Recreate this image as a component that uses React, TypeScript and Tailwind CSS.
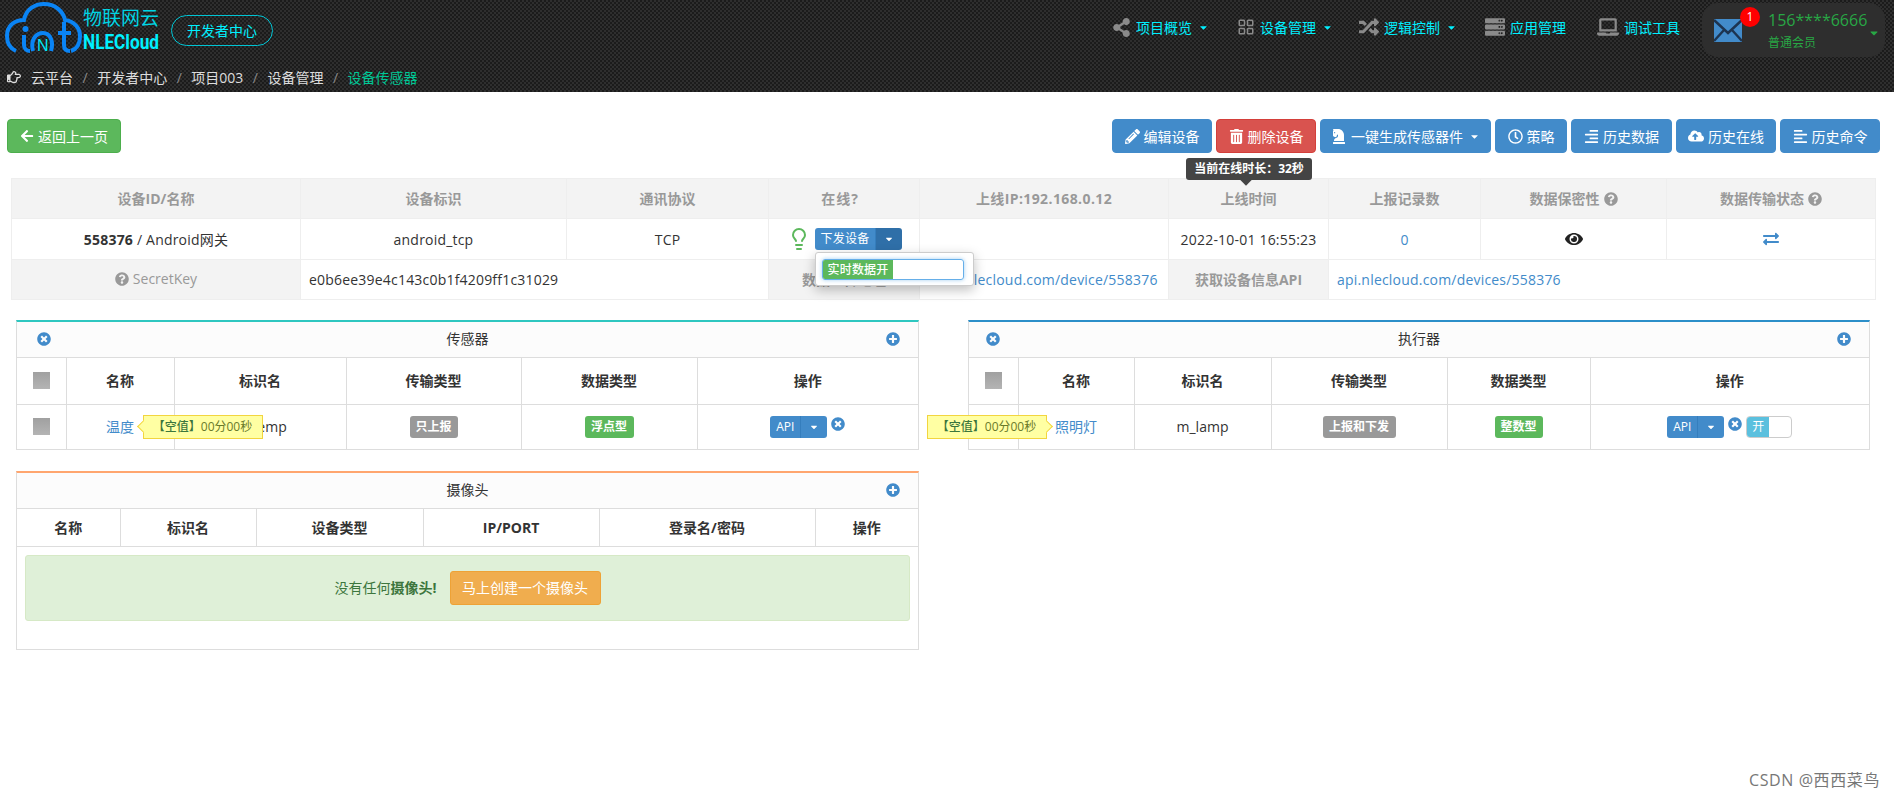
import React from "react";
import {
  FaAlignLeft, FaAlignRight, FaArrowLeft, FaCaretDown, FaChessKnight, FaCloudUploadAlt, FaExchangeAlt, FaEye,
  FaLaptop, FaPencilAlt, FaPlusCircle, FaQuestionCircle, FaRandom, FaRegClock, FaRegHandPointRight, FaServer, FaShareAlt,
  FaTimesCircle, FaTrashAlt,
} from "react-icons/fa";
import { LuLayoutGrid, LuLightbulb } from "react-icons/lu";

const FONT = "font-['Open_Sans','Noto_Sans_CJK_SC',sans-serif]";

function Logo() {
  return (
    <svg width="80" height="54" viewBox="0 0 80 54" className="shrink-0">
      <g fill="none" stroke="#0a84f5" strokeWidth="4" strokeLinecap="butt">
        <path d="M14 51 C7 48 5 41 5 36 C5 26 12 20 22 20 C24 9 33 4 42 4 C53 4 61 11 63 20 C72 21 78 28 78 36 C78 43 75 49 69 51" />
        <path d="M22 35 V45 C22 49 25 51 28 51" />
        <path d="M31 51 C28 40 34 33 41 33 C48 33 52 41 49 51" />
        <path d="M62 22 V45 C62 49 64 51 68 51" />
        <path d="M56 33 H69" />
      </g>
      <circle cx="23.5" cy="29" r="3" fill="#0a84f5" />
      <text x="35" y="51" fontSize="16" fill="#00e8f8" fontFamily="Liberation Sans">N</text>
    </svg>
  );
}

function NavItem({ icon, label, caret, className }: { icon: React.ReactNode; label: string; caret?: boolean; className: string }) {
  return (
    <div className={`mb-[6px] flex items-center text-[14px] text-[#00f0ff] ${className}`}>
      <span className="mr-[5px] text-[#8a8a8a]">{icon}</span>
      <span>{label}</span>
      {caret && <FaCaretDown className="ml-[6px]" size={11} />}
    </div>
  );
}

function Envelope() {
  return (
    <svg width="28" height="23" viewBox="0 0 28 23" className="shrink-0">
      <rect width="28" height="23" fill="#428bca" />
      <path d="M0 1 L14 14 L28 1 M0 22 L10 11 M28 22 L18 11" fill="none" stroke="#1d3450" strokeWidth="2.4" />
    </svg>
  );
}

function TopBtn({ icon, label, red, width, caret }: { icon: React.ReactNode; label: string; red?: boolean; width: string; caret?: boolean }) {
  return (
    <div className={`flex h-[34px] items-center justify-center gap-[4px] rounded-[4px] border text-[14px] text-white ${width} ${red ? "border-[#d43f3a] bg-[#d9534f]" : "border-[#428bca] bg-[#428bca]"}`}>
      {icon}
      <span>{label}</span>
      {caret && <FaCaretDown className="ml-[2px]" size={11} />}
    </div>
  );
}

function Split({ label, main, caret, dark }: { label: string; main: string; caret: string; dark?: boolean }) {
  return (
    <div className="inline-flex h-[22px] overflow-hidden rounded-[3px] align-middle text-[12px] text-white">
      <span className={`flex items-center justify-center bg-[#428bca] ${main}`}>{label}</span>
      <span className={`flex items-center justify-center border-l border-[#357ebd] ${dark ? "bg-[#2f6fa8]" : "bg-[#428bca]"} ${caret}`}>
        <FaCaretDown size={10} />
      </span>
    </div>
  );
}

function Tag({ label, green, width }: { label: string; green?: boolean; width: string }) {
  return (
    <span className={`inline-flex h-[22px] items-center justify-center rounded-[3px] align-middle text-[12px] font-bold text-white ${width} ${green ? "bg-[#5cb85c]" : "bg-[#999999]"}`}>
      {label}
    </span>
  );
}

function Check() {
  return <div className="mx-auto h-[17px] w-[17px] bg-gradient-to-b from-[#a0a0a0] to-[#b4b4b4]" />;
}

function Hint({ right, className }: { right?: boolean; className: string }) {
  return (
    <div className={`absolute z-10 flex h-[24px] w-[120px] items-center justify-center whitespace-nowrap border border-[#f2d53f] bg-[#ffffa3] text-[12px] text-[#6a7a2a] ${className}`}>
      <span className="font-medium text-[#3c763d]">【空值】</span>
      <span>00分00秒</span>
      <span
        className={`absolute top-[6px] h-[9px] w-[9px] rotate-45 border-[#f2d53f] bg-[#ffffa3] ${right ? "right-[-5px] border-t border-r" : "left-[-5px] border-b border-l"}`}
      />
    </div>
  );
}

function Panel({ title, color, leftIcon, children }: { title: string; color: string; leftIcon?: string; children: React.ReactNode }) {
  return (
    <section className={`border-x border-b border-x-[#dddddd] border-b-[#dddddd] border-t-2 ${color}`}>
      <div className="relative flex h-[36px] items-center justify-center border-b border-[#dddddd] bg-[#fcfcfc] pb-[2px] text-[14px] text-[#333333]">
        {leftIcon && <FaTimesCircle size={14} className={`absolute text-[#428bca] ${leftIcon}`} />}
        <span>{title}</span>
        <FaPlusCircle size={14} className="absolute right-[18px] text-[#428bca]" />
      </div>
      {children}
    </section>
  );
}

function Colgroup({ widths }: { widths: string[] }) {
  return (
    <colgroup>
      {widths.map((w, i) => (
        <col key={i} className={w} />
      ))}
    </colgroup>
  );
}

const CELL = "border border-[#dddddd] text-center align-middle text-[14px] first:border-l-0 last:border-r-0 border-t-0";
const TH = `${CELL} font-bold text-[#333333]`;
const TD = `relative ${CELL} border-b-0`;
const BODY = "text-[#333333]";
const LINK = "text-[#428bca]";
const GREY = "text-[#999999]";

const MBASE = "border border-[#eeeeee] text-center align-middle text-[14px]";
const MH = `${MBASE} bg-[#f3f3f3] font-bold ${GREY}`;
const MD = `relative ${MBASE} tracking-[0.2px]`;
const ML = `${MBASE} bg-[#f3f3f3] ${GREY}`;

export default function App() {
  return (
    <div className={`relative min-h-[794px] bg-white ${FONT}`}>
      <header className="h-[92px] bg-[repeating-conic-gradient(#2e2e2e_0%_25%,#1b1b1b_0%_50%)] bg-[length:4px_4px]">
        <div className="flex h-[62px] items-start pl-[2px] pr-[9px]">
          <Logo />
          <div className="ml-[1px] flex w-[78px] flex-col items-start">
            <span className="mt-[5px] text-[19px] leading-[26px] text-[#00d4e4]">物联网云</span>
            <span className="origin-left scale-x-[0.86] font-['Roboto',sans-serif] text-[20px] font-bold leading-[22px] text-[#00f0ff]">NLECloud</span>
          </div>
          <div className="ml-[10px] mt-[15px] flex h-[31px] w-[102px] items-center justify-center rounded-full border border-[#00c4d4] text-[14px] text-[#00f0ff]">开发者中心</div>
          <div className="ml-auto mt-[3px] flex h-[54px] items-center">
            <NavItem icon={<FaShareAlt size={19} />} label="项目概览" caret className="w-[125px]" />
            <NavItem icon={<LuLayoutGrid size={18} />} label="设备管理" caret className="w-[122px]" />
            <NavItem icon={<FaRandom size={20} />} label="逻辑控制" caret className="w-[126px]" />
            <NavItem icon={<FaServer size={20} />} label="应用管理" className="w-[112px]" />
            <NavItem icon={<FaLaptop size={22} />} label="调试工具" className="w-[105px]" />
            <div className="relative flex h-[54px] w-[183px] items-center rounded-[16px] bg-[#2e2e2e] pl-[12px]">
              <Envelope />
              <span className="absolute left-[38px] top-[4px] flex h-[20px] w-[20px] items-center justify-center rounded-full bg-[#ff0000] text-[12px] text-white">1</span>
              <div className="ml-[26px] flex w-[91px] shrink-0 flex-col">
                <span className="text-[16px] leading-[22px] text-[#28a745]">156****6666</span>
                <span className="mt-[4px] text-[12px] leading-[16px] text-[#28a745]">普通会员</span>
              </div>
              <FaCaretDown size={12} className="ml-[9px] mt-[5px] shrink-0 text-[#28a745]" />
            </div>
          </div>
        </div>
        <nav className="flex h-[30px] items-center pl-[7px] text-[14px] text-[#dddddd]">
          <FaRegHandPointRight size={14} className="mr-[10px]" />
          <span>云平台</span>
          <span className="mx-[9.5px] text-[#8a8a8a]">/</span>
          <span>开发者中心</span>
          <span className="mx-[9.5px] text-[#8a8a8a]">/</span>
          <span>项目003</span>
          <span className="mx-[9.5px] text-[#8a8a8a]">/</span>
          <span>设备管理</span>
          <span className="mx-[9.5px] text-[#8a8a8a]">/</span>
          <span className="text-[#00c896]">设备传感器</span>
        </nav>
      </header>

      <div className="flex items-start justify-between pl-[7px] pr-[14px] pt-[27px]">
        <div className="flex h-[34px] w-[114px] items-center justify-center gap-[4px] rounded-[4px] border border-[#4cae4c] bg-[#5cb85c] text-[14px] text-white">
          <FaArrowLeft size={14} />
          <span>返回上一页</span>
        </div>
        <div className="flex gap-[4px]">
          <TopBtn icon={<FaPencilAlt size={15} />} label="编辑设备" width="w-[100px]" />
          <TopBtn icon={<FaTrashAlt size={15} />} label="删除设备" red width="w-[100px]" />
          <TopBtn icon={<FaChessKnight size={16} />} label="一键生成传感器件" caret width="w-[171px]" />
          <TopBtn icon={<FaRegClock size={15} />} label="策略" width="w-[72px]" />
          <TopBtn icon={<FaAlignRight size={15} />} label="历史数据" width="w-[101px]" />
          <TopBtn icon={<FaCloudUploadAlt size={16} />} label="历史在线" width="w-[100px]" />
          <TopBtn icon={<FaAlignLeft size={15} />} label="历史命令" width="w-[100px]" />
        </div>
      </div>

      <div className="relative ml-[11px] mt-[25px] w-[1864px]">
        <div className="absolute left-[1175px] top-[-20px] z-20 flex h-[22px] w-[126px] items-center justify-center rounded-[3px] bg-[#444444] text-[12px] font-bold text-white">
          当前在线时长：32秒
          <span className="absolute bottom-[-4px] left-[56px] h-[8px] w-[8px] rotate-45 bg-[#444444]" />
        </div>
        <table className="w-full table-fixed">
          <Colgroup widths={["w-[289px]", "w-[266px]", "w-[202px]", "w-[151px]", "w-[249px]", "w-[160px]", "w-[152px]", "w-[186px]", "w-[209px]"]} />
          <thead>
            <tr className="h-[40px]">
              <th className={MH}>设备ID/名称</th>
              <th className={MH}>设备标识</th>
              <th className={MH}>通讯协议</th>
              <th className={MH}><span className="pr-[8px] tracking-[1px]">在线?</span></th>
              <th className={MH}><span className="tracking-[0.4px]">上线IP:192.168.0.12</span></th>
              <th className={MH}>上线时间</th>
              <th className={MH}>上报记录数</th>
              <th className={MH}>
                <span className="inline-flex items-center gap-[4px]">数据保密性<FaQuestionCircle size={14} /></span>
              </th>
              <th className={MH}>
                <span className="inline-flex items-center gap-[4px]">数据传输状态<FaQuestionCircle size={14} /></span>
              </th>
            </tr>
          </thead>
          <tbody className={BODY}>
            <tr className="h-[41px]">
              <td className={MD}><b>558376</b> / Android网关</td>
              <td className={MD}>android_tcp</td>
              <td className={MD}>TCP</td>
              <td className={MD}>
                <div className="flex items-center justify-start pl-[18px]">
                  <LuLightbulb size={24} className="mr-[4px] text-[#5cb85c]" />
                  <Split label="下发设备" main="w-[60px]" caret="w-[27px]" dark />
                </div>
                <div className="absolute left-[46px] top-[33px] z-20 h-[34px] w-[159px] rounded-[3px] border border-[#cccccc] bg-white p-[6px] shadow-[0_4px_12px_rgba(0,0,0,0.25)]">
                  <div className="flex h-[21px] w-[142px] overflow-hidden rounded-[3px] border border-[#66afe9] shadow-[0_0_4px_rgba(102,175,233,0.6)]">
                    <span className="flex w-[70px] items-center justify-center bg-[#5cb85c] text-[12px] font-medium text-white">实时数据开</span>
                  </div>
                </div>
              </td>
              <td className={MD}></td>
              <td className={MD}>2022-10-01 16:55:23</td>
              <td className={MD}><span className={LINK}>0</span></td>
              <td className={MD}><FaEye size={18} className="mx-auto text-[#222222]" /></td>
              <td className={MD}><FaExchangeAlt size={16} className="mx-auto text-[#428bca]" /></td>
            </tr>
            <tr className="h-[40px]">
              <td className={ML}>
                <span className="inline-flex items-center gap-[4px]"><FaQuestionCircle size={14} />SecretKey</span>
              </td>
              <td className={`${MD} pl-[8px] text-left`} colSpan={2}>e0b6ee39e4c143c0b1f4209ff1c31029</td>
              <td className={`${ML} font-bold`}>数据上传地址</td>
              <td className={`${MD} pl-[8px] text-left`}><span className={LINK}>www.nlecloud.com/device/558376</span></td>
              <td className={`${ML} font-bold`}>获取设备信息API</td>
              <td className={`${MD} pl-[8px] text-left`} colSpan={3}><span className={LINK}>api.nlecloud.com/devices/558376</span></td>
            </tr>
          </tbody>
        </table>
      </div>

      <div className="mt-[20px] flex items-start gap-[49px] pl-[16px] pr-[24px]">
        <div className="flex w-[903px] flex-col gap-[21px]">
          <Panel title="传感器" color="border-t-[#2ec7c0]" leftIcon="left-[20px]">
            <table className="w-full table-fixed">
              <Colgroup widths={["w-[49px]", "w-[108px]", "w-[172px]", "w-[175px]", "w-[176px]", "w-[221px]"]} />
              <thead>
                <tr className="h-[46px]">
                  <th className={TH}><Check /></th>
                  <th className={TH}>名称</th>
                  <th className={TH}>标识名</th>
                  <th className={TH}>传输类型</th>
                  <th className={TH}>数据类型</th>
                  <th className={TH}>操作</th>
                </tr>
              </thead>
              <tbody className={BODY}>
                <tr className="h-[45px]">
                  <td className={TD}><Check /></td>
                  <td className={TD}>
                    <span className={LINK}>温度</span>
                    <Hint className="left-[76px] top-[10px]" />
                  </td>
                  <td className={TD}>m_temp</td>
                  <td className={TD}><Tag label="只上报" width="w-[48px]" /></td>
                  <td className={TD}><Tag label="浮点型" green width="w-[49px]" /></td>
                  <td className={TD}>
                    <span className="inline-flex items-center gap-[4px]">
                      <Split label="API" main="w-[30px]" caret="w-[27px]" />
                      <FaTimesCircle size={14} className="mb-[6px] text-[#428bca]" />
                    </span>
                  </td>
                </tr>
              </tbody>
            </table>
          </Panel>

          <Panel title="摄像头" color="border-t-[#ffa66f]">
            <table className="w-full table-fixed">
              <Colgroup widths={["w-[103px]", "w-[136px]", "w-[167px]", "w-[176px]", "w-[216px]", "w-[103px]"]} />
              <thead>
                <tr className="h-[37px]">
                  <th className={TH}>名称</th>
                  <th className={TH}>标识名</th>
                  <th className={TH}>设备类型</th>
                  <th className={TH}>IP/PORT</th>
                  <th className={TH}>登录名/密码</th>
                  <th className={TH}>操作</th>
                </tr>
              </thead>
            </table>
            <div className="mx-[8px] mb-[28px] mt-[8px] flex h-[66px] items-center justify-center gap-[13px] rounded-[3px] border border-[#d6e9c6] bg-[#dff0d8] text-[14px] text-[#3c763d]">
              <span>没有任何<b>摄像头!</b></span>
              <span className="flex h-[34px] w-[151px] items-center justify-center rounded-[3px] border border-[#eea236] bg-[#f0ad4e] text-white">马上创建一个摄像头</span>
            </div>
          </Panel>
        </div>

        <div className="w-[902px]">
          <Panel title="执行器" color="border-t-[#2c8fc9]" leftIcon="left-[17px]">
            <table className="w-full table-fixed">
              <Colgroup widths={["w-[49px]", "w-[116px]", "w-[137px]", "w-[176px]", "w-[143px]", "w-[279px]"]} />
              <thead>
                <tr className="h-[46px]">
                  <th className={TH}><Check /></th>
                  <th className={TH}>名称</th>
                  <th className={TH}>标识名</th>
                  <th className={TH}>传输类型</th>
                  <th className={TH}>数据类型</th>
                  <th className={TH}>操作</th>
                </tr>
              </thead>
              <tbody className={BODY}>
                <tr className="h-[45px]">
                  <td className={TD}><Check /></td>
                  <td className={TD}>
                    <Hint right className="left-[-92px] top-[10px]" />
                    <span className={LINK}>照明灯</span>
                  </td>
                  <td className={TD}>m_lamp</td>
                  <td className={TD}><Tag label="上报和下发" width="w-[73px]" /></td>
                  <td className={TD}><Tag label="整数型" green width="w-[48px]" /></td>
                  <td className={TD}>
                    <span className="inline-flex items-center gap-[4px]">
                      <Split label="API" main="w-[30px]" caret="w-[27px]" />
                      <FaTimesCircle size={14} className="mb-[6px] text-[#428bca]" />
                      <span className="flex h-[22px] w-[46px] overflow-hidden rounded-[4px] border border-[#cccccc]">
                        <span className="flex w-[22px] items-center justify-center bg-[#5bc0de] text-[12px] text-white">开</span>
                      </span>
                    </span>
                  </td>
                </tr>
              </tbody>
            </table>
          </Panel>
        </div>
      </div>

      <div className="absolute right-[14px] top-[768px] text-[16px] tracking-[0.6px] text-[#777777]">CSDN @西西菜鸟</div>
    </div>
  );
}
